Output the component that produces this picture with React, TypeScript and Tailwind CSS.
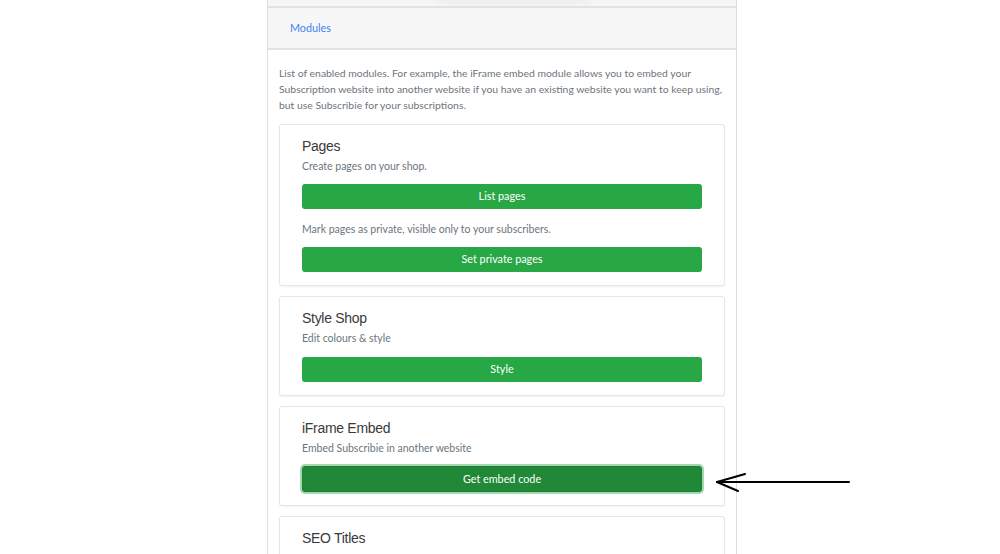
import React from "react";

const Btn = ({ label, focused }: { label: string; focused?: boolean }) => (
  <button
    className={
      focused
        ? "block w-full h-[26px] rounded-[3px] bg-[#218838] border border-[#1e7e34] text-white text-[10.8px] shadow-[0_0_0_2px_rgba(72,180,97,0.5)]"
        : "block w-full h-[25px] rounded-[3px] bg-[#28a745] text-white text-[10.8px]"
    }
  >
    {label}
  </button>
);

const Card = ({ title, children }: { title: string; children?: React.ReactNode }) => (
  <div className="border border-[#e6e6e6] rounded-[3px] shadow-[0_1px_2px_rgba(0,0,0,0.06)] bg-white px-[22px] pt-[12px] pb-[13px] mb-[10px]">
    <h5 className="text-[14px] leading-[18px] tracking-[-0.3px] text-[#3a3a3a] mb-[3px] font-['Liberation_Sans',sans-serif]">{title}</h5>
    {children}
  </div>
);

const App = () => {
  return (
    <div className="relative w-[1000px] h-[554px] overflow-hidden bg-white font-['Lato',sans-serif]">
      <div className="ml-[267px] w-[470px] h-[554px] border-x border-[#dedede]">
        {/* strip above */}
        <div className="relative h-[8px] bg-[#f5f5f5] border-b-2 border-[#e2e2e2] overflow-hidden">
          <div className="absolute left-[170px] top-[-6px] w-[150px] h-[8px] rounded-full bg-[#ebebeb] blur-[3px]"></div>
        </div>
        {/* header */}
        <div className="h-[42px] bg-[#f7f7f7] border-b-2 border-[#e2e2e2] flex items-center px-[22px]">
          <a className="text-[10.8px] text-[#3b82f6]">Modules</a>
        </div>
        {/* body */}
        <div className="px-[11px] pt-[15px]">
          <p className="text-[10.4px] leading-[16px] text-[#6c757d] mb-[11px]">
            List of enabled modules. For example, the iFrame embed module allows you to embed your Subscription website into another website if you have an existing website you want to keep using, but use Subscribie for your subscriptions.
          </p>

          <Card title="Pages">
            <p className="text-[10.5px] leading-[16px] text-[#6c757d] mb-[10px]">Create pages on your shop.</p>
            <Btn label="List pages" />
            <p className="text-[10.5px] leading-[16px] text-[#6c757d] mt-[12px] mb-[10px]">Mark pages as private, visible only to your subscribers.</p>
            <Btn label="Set private pages" />
          </Card>

          <Card title="Style Shop">
            <p className="text-[10.5px] leading-[16px] text-[#6c757d] mb-[11px]">Edit colours &amp; style</p>
            <Btn label="Style" />
          </Card>

          <Card title="iFrame Embed">
            <p className="text-[10.5px] leading-[16px] text-[#6c757d] mb-[10px]">Embed Subscribie in another website</p>
            <Btn label="Get embed code" focused />
          </Card>

          <Card title="SEO Titles" />
        </div>
      </div>

      {/* annotation arrow */}
      <svg className="absolute left-[712px] top-[470px]" width="142" height="26" viewBox="0 0 142 26">
        <path d="M5 12 L137 12" stroke="#000" strokeWidth="2" strokeLinecap="round" fill="none" />
        <path d="M33 4 L5 12 L26 21" stroke="#000" strokeWidth="2" strokeLinecap="round" strokeLinejoin="round" fill="none" />
      </svg>
    </div>
  );
};

export default App;
